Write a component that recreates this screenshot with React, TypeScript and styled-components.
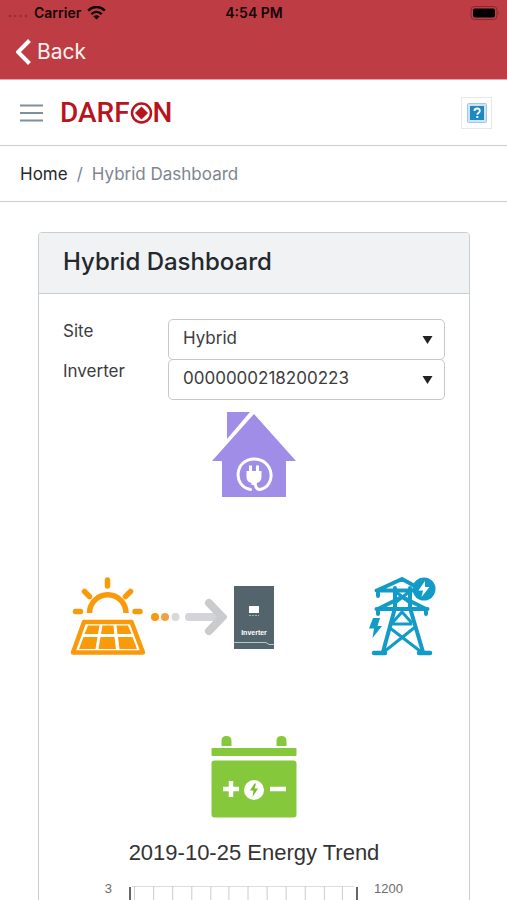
import React from "react";
import styled, { createGlobalStyle } from "styled-components";

const GlobalStyle = createGlobalStyle`
  *, *::before, *::after { box-sizing: border-box; }
  body {
    margin: 0;
    background: #fff;
    color: #23282c;
    font-family: Inter, "Liberation Sans", sans-serif;
    font-size: 17px;
    line-height: 24px;
  }
`;

const Screen = styled.div`
  display: flex;
  flex-direction: column;
  height: 100vh;
  overflow: hidden;
`;

const TopArea = styled.div`
  flex: none;
  height: 80px;
  background: #be3d44;
  border-bottom: 1px solid #e9a3aa;
`;

const StatusBar = styled.div`
  display: grid;
  grid-template-columns: 1fr auto 1fr;
  align-items: center;
  height: 26px;
  padding: 0 7px 0 8px;
  color: #120506;
  font-size: 14px;
  font-weight: 600;
  line-height: 26px;
`;

const StatusSide = styled.div<{ $end?: boolean }>`
  display: flex;
  align-items: center;
  gap: 6px;
  justify-content: ${(p) => (p.$end ? "flex-end" : "flex-start")};
`;

const BackButton = styled.button`
  display: flex;
  align-items: center;
  gap: 6px;
  height: 52px;
  padding: 0 16px;
  border: 0;
  background: none;
  color: #fdf1f1;
  font: inherit;
  font-size: 21px;
  cursor: pointer;
`;

const Header = styled.header`
  flex: none;
  display: flex;
  align-items: center;
  height: 66px;
  padding: 0 15px 0 20px;
  border-bottom: 1px solid #c8ced3;
`;

const IconButton = styled.button`
  display: flex;
  padding: 0;
  border: 0;
  background: none;
  cursor: pointer;
`;

const Brand = styled.a`
  display: flex;
  align-items: center;
  margin: 0 auto 0 17px;
  color: #b8141e;
  font-family: Roboto, sans-serif;
  font-size: 28px;
  font-weight: 500;
  line-height: 32px;
  text-decoration: none;
`;

const HelpButton = styled(IconButton)`
  align-items: center;
  justify-content: center;
  width: 31px;
  height: 32px;
  border: 1px solid #ebe6e8;
`;

const Breadcrumb = styled.nav`
  flex: none;
  display: flex;
  align-items: center;
  gap: 9px;
  height: 56px;
  padding: 0 20px;
  border-bottom: 1px solid #c8ced3;
  color: #7d868e;
`;

const HomeLink = styled.a`
  color: #23282c;
  text-decoration: none;
`;

const Main = styled.main`
  flex: 1;
  min-height: 0;
  padding: 30px 37px 30px 38px;
  overflow-y: auto;
  scrollbar-width: none;
`;

const Card = styled.section`
  border: 1px solid #c8ced3;
  border-radius: 4px;
  overflow: hidden;
`;

const CardHeader = styled.div`
  padding: 13px 24px 15px;
  border-bottom: 1px solid #c8ced3;
  background: #f0f2f4;
`;

const CardTitle = styled.h1`
  margin: 0;
  font-size: 24px;
  font-weight: 500;
  line-height: 32px;
`;

const CardBody = styled.div`
  padding: 25px 24px;
`;

const Field = styled.div`
  display: grid;
  grid-template-columns: 105px 1fr;
`;

const FieldLabel = styled.label`
  color: #3a3d40;
`;

const SelectBox = styled.div`
  display: grid;
  align-items: center;

  > * { grid-area: 1 / 1; }
  > svg { justify-self: end; margin-right: 12px; pointer-events: none; }
`;

const Select = styled.select`
  width: 100%;
  height: 41px;
  margin-bottom: -1px;
  padding: 0 32px 3px 14px;
  appearance: none;
  border: 1px solid #c8c8c8;
  border-radius: 5px;
  background: #fff;
  color: #3c3c3c;
  font: inherit;
`;

const Flow = styled.div`
  display: flex;
  flex-direction: column;
  align-items: center;
  gap: 79px;
  padding-top: 13px;
`;

const FlowRow = styled.div`
  display: flex;
  align-items: center;
  align-self: stretch;
`;

const FlowSide = styled.div<{ $end?: boolean }>`
  flex: 1;
  display: flex;
  align-items: center;
  justify-content: ${(p) => (p.$end ? "flex-end" : "space-between")};
  padding: 0 7px;
`;

const InverterBox = styled.div`
  display: flex;
  flex-direction: column;
  align-items: center;
  width: 40px;
  height: 63px;
  padding-top: 18px;
  background: #53646d;
  color: #fff;
  font-family: "Liberation Sans", sans-serif;
  font-size: 7px;
  font-weight: 700;
  line-height: 10px;
`;

const Trend = styled.figure`
  margin: 21px 0 0;
`;

const TrendTitle = styled.figcaption`
  color: #333;
  font-family: "Liberation Sans", Arial, sans-serif;
  font-size: 22px;
  line-height: 28px;
  text-align: center;
`;

const Plot = styled.div`
  display: grid;
  grid-template-columns: 49px 1fr 71px;
  column-gap: 16px;
  margin-top: 14px;
  color: #6b6b6b;
  font-family: "Liberation Sans", Arial, sans-serif;
  font-size: 13px;
  line-height: 16px;

  > span:first-child { text-align: right; }
  > svg { width: 100%; margin-top: 5px; }
`;

const Caret = () => (
  <svg width="11" height="10" viewBox="0 0 11 10" aria-hidden="true">
    <path d="M.5 2h10L5.500 10z" fill="#222" />
  </svg>
);

const Wifi = () => (
  <svg width="19" height="14" viewBox="0 0 19 14" fill="none" stroke="#120506" aria-hidden="true">
    <path d="M1.200 4.600C6-.2 13-.2 17.800 4.600" strokeWidth="2.600" />
    <path d="M4.300 8.100c3-3 7.400-3 10.400 0" strokeWidth="2.400" />
    <path d="M9.500 13.500 6.400 10.400c1.700-1.700 4.500-1.700 6.200 0z" fill="#120506" stroke="none" />
  </svg>
);

const House = () => (
  <svg width="86" height="86" viewBox="0 0 86 86" aria-label="House load">
    <g fill="#9f8de8">
      <path d="M16 0h23L16 27z" />
      <path d="M43 2 85 49H75V85H11V49H1z" />
    </g>
    <path d="M39.500 77.500C21 74 24 47 43 47c20 0 23 27 6 30.500-4 0-5-3-5-8" fill="none" stroke="#fff" strokeWidth="3" strokeLinecap="round" />
    <path d="M39.500 53.500v6m7-6v6" stroke="#fff" strokeWidth="3" />
    <path d="M35.500 59H50.500v6q0 5-5 6V73h-5v-2q-5-1-5-6z" fill="#fff" />
  </svg>
);

const Solar = () => (
  <svg width="76" height="80" viewBox="0 0 76 80" fill="none" stroke="#f99a0b" aria-label="Solar panels">
    <g strokeWidth="5.500" strokeLinecap="round">
      <path d="M37.500 3v6M14.500 14.500l5 5M60.500 14.500l-5 5M5.500 34.500h5M65 34.500h5" />
    </g>
    <path d="M19.500 36a18 18 0 0 1 36.500 0" strokeWidth="5.500" />
    <path d="M14 45h47.500L73 75.500H3z" strokeWidth="4.500" strokeLinejoin="round" />
    <g fill="#f99a0b" stroke="none">
      <path d="M18 48.500h11.500l-1.500 8.500H14.500zM32.500 48.500h11l.7 8.500H31zM46.500 48.500H58l3.500 8.500H47.500z" />
      <path d="M13.500 60h14L25.500 72H9zM30.500 60h14l1.500 12H28.500zM48 60h14.500L67 72H49.500z" />
    </g>
  </svg>
);

const Arrow = () => (
  <svg width="76" height="40" viewBox="0 0 76 40" fill="none" aria-label="Solar to inverter">
    <circle cx="4" cy="20" r="4" fill="#f9980a" />
    <circle cx="14" cy="20" r="4" fill="#eda345" />
    <circle cx="24.500" cy="20" r="4" fill="#d7dad8" />
    <path d="M38 20h32" stroke="#d3d3d9" strokeWidth="8" strokeLinecap="round" />
    <path d="M58 6l13.500 14L58 34" stroke="#cacbcc" strokeWidth="8" strokeLinecap="round" />
  </svg>
);

const Tower = () => (
  <svg width="70" height="80" viewBox="0 0 70 80" fill="none" stroke="#139bc8" strokeWidth="4" aria-label="Power grid">
    <g strokeLinejoin="round" strokeLinecap="round">
      <path d="M10 18v-5L34 2l20 11M8.500 13.500H48M10 19v-5" />
      <path d="M10 37v-5L34 20l24 12v5M8.500 32h51" />
      <path d="M27 11v20L15 75M42 11v20l13 44" />
      <path d="M27 14l15 12M42 14L27 26M25 45 34 35l9 10M25 47h18M22 51l30 23M46 51 17 74" strokeWidth="3" />
      <path d="M6 76h11M51 76h11" strokeWidth="4.500" />
    </g>
    <circle cx="56" cy="12" r="11.500" fill="#139bc8" stroke="none" />
    <path d="M57 4 50.500 13.500H55L53.500 20 61.500 10H57z" fill="#fff" stroke="none" />
    <path d="M5 41 1 51.500h5L4.500 61 14 49H9.500l2.500-8z" fill="#139bc8" stroke="none" />
  </svg>
);

const Battery = () => (
  <svg width="86" height="82" viewBox="0 0 86 82" aria-label="Battery">
    <g fill="#86c83c">
      <path d="M10.500 10V5q0-5 5-5t5 5v5zM65.500 10V5q0-5 5-5t5 5v5z" />
      <rect x=".5" y="12" width="85" height="8" rx="1" />
      <rect x=".5" y="24.500" width="85" height="57" rx="3" />
    </g>
    <path d="M12 53h16M20 45v16M59 53h16" stroke="#fff" strokeWidth="4.500" />
    <circle cx="43" cy="54" r="10" fill="#fff" />
    <path d="M43.500 47.500 39 54.500h3.500L41.500 61 47 52.500h-3.500l1.500-5z" fill="#78bd2c" />
  </svg>
);

const gridLines = [6, 25, 44, 63, 82, 100, 119, 138, 157, 176, 195, 213];

const App = () => (
  <>
    <GlobalStyle />
    <Screen>
      <TopArea>
        <StatusBar>
          <StatusSide>
            <svg width="20" height="10" viewBox="0 0 20 10" fill="#8e3338" aria-hidden="true">
              <circle cx="2" cy="8" r="1.300" /><circle cx="7" cy="8" r="1.300" />
              <circle cx="12.500" cy="8" r="1.300" /><circle cx="18" cy="8" r="1.300" />
            </svg>
            <span>Carrier</span>
            <Wifi />
          </StatusSide>
          <span>4:54 PM</span>
          <StatusSide $end>
            <svg width="30" height="14" viewBox="0 0 30 14" aria-label="Battery full">
              <rect x="1" y=".5" width="26" height="13" rx="3.500" fill="none" stroke="#84292f" />
              <rect x="3" y="2.500" width="22" height="9" rx="2" fill="#000" />
              <path d="M28.500 5v4q1.500-2 0-4" fill="#84292f" />
            </svg>
          </StatusSide>
        </StatusBar>
        <BackButton type="button">
          <svg width="15" height="26" viewBox="0 0 15 26" fill="none" aria-hidden="true">
            <path d="M13.500 1.500 2 13l11.500 11.500" stroke="#fff" strokeWidth="4" />
          </svg>
          Back
        </BackButton>
      </TopArea>

      <Header>
        <IconButton type="button" aria-label="Menu">
          <svg width="23" height="18" viewBox="0 0 23 18" stroke="#7e8f9d" strokeWidth="2">
            <path d="M0 1.500h23M0 9h23M0 16.500h23" />
          </svg>
        </IconButton>
        <Brand href="#home" aria-label="DARFON">
          <span>DARF</span>
          <svg width="23" height="22" viewBox="0 0 23 22" aria-hidden="true">
            <circle cx="11.500" cy="11" r="9.500" fill="none" stroke="#b8141e" strokeWidth="2.500" />
            <path d="M11.500 4.500 18 11l-6.500 6.500L5 11z" fill="#b8141e" />
          </svg>
          <span>N</span>
        </Brand>
        <HelpButton type="button" aria-label="Help">
          <svg width="20" height="20" viewBox="0 0 20 20">
            <rect x=".5" y=".5" width="19" height="19" rx="1" fill="#cfe3f2" stroke="#9fc9e6" />
            <rect x="3" y="3" width="14" height="14" fill="#1f87c4" />
            <path d="M7.500 8q0-2.500 2.700-2.500T12.800 8c0 1.700-2.500 1.700-2.500 3.800" fill="none" stroke="#fff" strokeWidth="1.800" />
            <rect x="9.300" y="13" width="2" height="2" fill="#fff" />
          </svg>
        </HelpButton>
      </Header>

      <Breadcrumb aria-label="Breadcrumb">
        <HomeLink href="#home">Home</HomeLink>
        <span>/</span>
        <span>Hybrid Dashboard</span>
      </Breadcrumb>

      <Main>
        <Card>
          <CardHeader>
            <CardTitle>Hybrid Dashboard</CardTitle>
          </CardHeader>
          <CardBody>
            <Field>
              <FieldLabel htmlFor="site">Site</FieldLabel>
              <SelectBox>
                <Select id="site"><option>Hybrid</option></Select>
                <Caret />
              </SelectBox>
            </Field>
            <Field>
              <FieldLabel htmlFor="inverter">Inverter</FieldLabel>
              <SelectBox>
                <Select id="inverter"><option>0000000218200223</option></Select>
                <Caret />
              </SelectBox>
            </Field>

            <Flow>
              <House />
              <FlowRow>
                <FlowSide>
                  <Solar />
                  <Arrow />
                </FlowSide>
                <InverterBox>
                  <svg width="40" height="24" viewBox="0 0 40 24" aria-hidden="true">
                    <rect x="15" y="2" width="10" height="7" fill="#fff" />
                    <path d="M15 11.500h10" stroke="#aab4b9" strokeDasharray="2 1" />
                  </svg>
                  <span>Inverter</span>
                  <svg width="40" height="8" viewBox="0 0 40 8" fill="none" aria-hidden="true">
                    <path d="M0 4.500h32l3 2h5" stroke="#b8c5cb" />
                  </svg>
                </InverterBox>
                <FlowSide $end>
                  <Tower />
                </FlowSide>
              </FlowRow>
              <Battery />
            </Flow>

            <Trend>
              <TrendTitle>2019-10-25 Energy Trend</TrendTitle>
              <Plot>
                <span>3</span>
                <svg height="220" viewBox="0 0 229 220" preserveAspectRatio="none" aria-label="Energy trend chart">
                  <path d="M4 .5h221" stroke="#ddd" />
                  {gridLines.map((x) => (
                    <path key={x} d={`M${x + 0.5} 0v220`} stroke="#ccc" />
                  ))}
                  <path d="M2 1v219M228 1v219" stroke="#666" strokeWidth="2" />
                </svg>
                <span>1200</span>
              </Plot>
            </Trend>
          </CardBody>
        </Card>
      </Main>
    </Screen>
  </>
);

export default App;
